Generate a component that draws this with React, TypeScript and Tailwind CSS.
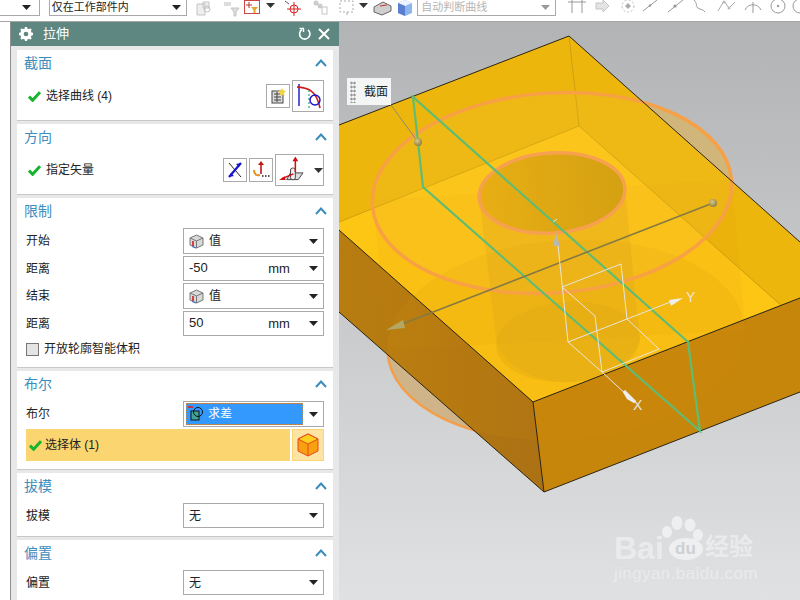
import React from "react";

const Caret = ({ c = "#222" }: { c?: string }) => (
  <svg width="9" height="5" viewBox="0 0 9 5" className="shrink-0"><path d="M0 0H9L4.5 5Z" fill={c} /></svg>
);

const Check = () => (
  <svg width="13" height="11" viewBox="0 0 13 11" className="shrink-0">
    <path d="M1 5.500L4.600 9.300L12 1.200" fill="none" stroke="#17b52e" strokeWidth="3" />
  </svg>
);

const Chevron = () => (
  <svg width="12" height="8" viewBox="0 0 12 8"><path d="M1 7L6 1.500L11 7" fill="none" stroke="#3a8dbd" strokeWidth="2" /></svg>
);

const ValueIcon = () => (
  <svg width="15" height="15" viewBox="0 0 15 15" className="shrink-0">
    <path d="M7.500 1L14 4V11L7.500 14L1 11V4Z" fill="#d8d8d8" stroke="#777" />
    <path d="M1 4L7.500 7L14 4M7.500 7V14" fill="none" stroke="#777" />
    <path d="M4 12V7" stroke="#d01010" strokeWidth="1.500" />
    <path d="M3 12.500L7 14" stroke="#4a78d8" strokeWidth="1.200" />
  </svg>
);

const Section = ({ title, h, children }: { title: string; h: string; children?: React.ReactNode }) => (
  <section className={`${h} bg-white border-b border-[#c8c8c8] mb-[3px] flex flex-col shrink-0`}>
    <div className="h-[26px] flex items-center justify-between pl-[7px] pr-[6px] text-[14px] text-[#3a8dbd]">
      <span>{title}</span>
      <Chevron />
    </div>
    {children}
  </section>
);

const Dropdown = ({ children, h = "h-[26px]" }: { children: React.ReactNode; h?: string }) => (
  <div className={`w-[141px] ${h} border border-[#aaaaaa] bg-white flex items-center justify-between pl-[5px] pr-[5px] text-[12px] text-[#222] shrink-0`}>
    {children}
  </div>
);

const Row = ({ label, children, cls = "" }: { label: string; children: React.ReactNode; cls?: string }) => (
  <div className={`flex items-center justify-between pl-[9px] pr-[9px] text-[12px] text-[#222] ${cls}`}>
    <span>{label}</span>
    {children}
  </div>
);

const Unit = ({ v }: { v: string }) => (
  <>
    <span className="w-[70px] -mt-[2px] text-[13px]">{v}</span>
    <span className="w-[36px] ml-auto mr-[12px] text-center text-[13px]">mm</span>
    <Caret />
  </>
);

const Box = ({ cls, children }: { cls: string; children: React.ReactNode }) => (
  <div className={`${cls} border border-[#aaaaaa] bg-white flex items-center justify-center shrink-0`}>{children}</div>
);

const Ico = ({ ml, w = 20, children }: { ml: string; w?: number; children: React.ReactNode }) => (
  <svg width={w} height="20" viewBox={`0 0 ${w} 20`} className={`${ml} shrink-0`}>{children}</svg>
);

const g = "#c4c4c4";

const Toolbar = () => (
  <header className="h-[22px] shrink-0 bg-white border-b border-[#a5a5a5] flex items-start text-[11px]">
    <div className="w-[40px] h-[16px] border border-t-0 border-l-0 border-[#aaaaaa] flex items-center justify-end pr-[8px]"><Caret /></div>
    <div className="ml-[9px] w-[140px] h-[16px] border border-t-0 border-[#aaaaaa] flex items-center justify-between pl-[2px] pr-[5px] text-[#222]">
      <span>仅在工作部件内</span><Caret />
    </div>
    <Ico ml="ml-[7px]"><path d="M3 4h8v11H3zM9 2h6v6H9z" fill="#eee" stroke={g} /><circle cx="13" cy="9" r="3" fill="none" stroke={g} /></Ico>
    <Ico ml="ml-[7px]"><path d="M3 2h7v4H3z" fill="#ddd" /><path d="M10 8h8l-3 4v4h-2v-4z" fill="#ddd" stroke={g} /></Ico>
    <div className="ml-[3px] w-[16px] h-[14px] border border-[#c44] flex items-center justify-center mt-0 shrink-0">
      <svg width="12" height="12" viewBox="0 0 12 12"><path d="M3 1v6M0 4h6" stroke="#b33" /><path d="M5 6h7l-2.500 3v3h-2V9z" fill="#e3a72b" /></svg>
    </div>
    <div className="ml-[6px] mt-[3px]"><Caret c="#333" /></div>
    <Ico ml="ml-[8px]"><path d="M2 1l4 3" stroke="#557" /><circle cx="11" cy="9" r="4" fill="none" stroke="#d22" /><path d="M11 2v14M4 9h14" stroke="#d22" /></Ico>
    <Ico ml="ml-[6px]"><circle cx="7" cy="3" r="2.500" fill="#ccc" /><circle cx="11" cy="6" r="2.500" fill="#ccc" /><rect x="13" y="7" width="5" height="7" fill="none" stroke={g} /></Ico>
    <Ico ml="ml-[8px]"><rect x="3" y="1" width="13" height="11" fill="none" stroke="#aaa" strokeDasharray="2 2" /><path d="M10 12v3" stroke="#aaa" /></Ico>
    <div className="ml-[2px] mt-[3px]"><Caret c="#333" /></div>
    <Ico ml="ml-[5px]"><path d="M1 7L10 2L18 6V11L9 15L1 12Z" fill="#cfcfcf" stroke="#666" /><path d="M7 6L14 5" stroke="#c33" /></Ico>
    <Ico ml="ml-[2px]"><path d="M3 3L10 0L17 3V13L10 16L3 13Z" fill="#8fb5ee" /><path d="M3 3L10 6L17 3L10 0Z" fill="#eef4ff" /><path d="M3 3L10 6V16L3 13Z" fill="#5a7fd0" /></Ico>
    <div className="ml-[2px] w-[140px] h-[16px] border border-t-0 border-[#aaaaaa] flex items-center justify-between pl-[3px] pr-[5px] text-[#b5b5b5]">
      <span>自动判断曲线</span><Caret c="#999" />
    </div>
    <Ico ml="ml-[11px]"><path d="M5 0v13M15 0v13M1 2h18" stroke="#999" fill="none" /></Ico>
    <Ico ml="ml-[5px]"><path d="M4 3h7V0l6 6-6 6V9H4z" fill="#e4e4e4" stroke={g} /></Ico>
    <Ico ml="ml-[6px]"><circle cx="10" cy="6" r="6" fill="none" stroke="#bbb" strokeDasharray="2 2" /><path d="M10 3l3 3-3 3-3-3z" fill="#aaa" /></Ico>
    <Ico ml="ml-[2px]"><path d="M3 11L17 0" stroke="#999" /><circle cx="10" cy="5.500" r="1.200" fill="#999" /></Ico>
    <Ico ml="ml-[5px]"><path d="M3 12L18 0" stroke="#999" /><circle cx="10" cy="6" r="1.600" fill="#999" /></Ico>
    <Ico ml="ml-[6px]"><path d="M3 0c4 4 1 6 4 8s5 1 7 4" fill="none" stroke="#999" /></Ico>
    <Ico ml="ml-[6px]"><path d="M1 11L7 1L12 8L18 2" fill="none" stroke="#aaa" /><circle cx="7" cy="2" r="1.500" fill="#bbb" /><circle cx="12" cy="8" r="1.500" fill="#bbb" /></Ico>
    <Ico ml="ml-[6px]"><path d="M2 10C5 3 15 3 18 10M10 2v11" fill="none" stroke="#999" /></Ico>
    <Ico ml="ml-[5px]"><circle cx="10" cy="6" r="7" fill="none" stroke="#999" /><circle cx="10" cy="6" r="1.200" fill="#999" /></Ico>
    <Ico ml="ml-[2px]" w={10}><circle cx="10" cy="6" r="7" fill="none" stroke="#999" /></Ico>
  </header>
);

const Panel = () => (
  <aside className="w-[329px] shrink-0 bg-[#e8e8e8] flex flex-col overflow-hidden border-l border-[#8f8f8f]">
    <div className="h-[24px] shrink-0 bg-[#5d8780] text-white flex items-center pl-[8px] pr-[9px] text-[13px]">
      <svg width="14" height="14" viewBox="0 0 24 24" className="shrink-0">
        <circle cx="12" cy="12" r="7" fill="none" stroke="#fff" strokeWidth="6" />
        <path d="M12 0v5M12 19v5M0 12h5M19 12h5M3.500 3.500l3.500 3.500M17 17l3.500 3.500M3.500 20.500L7 17M17 7l3.500-3.500" stroke="#fff" strokeWidth="4" />
      </svg>
      <span className="ml-[10px]">拉伸</span>
      <svg width="14" height="14" viewBox="0 0 14 14" className="ml-auto shrink-0"><path d="M4 2.500A5.200 5.200 0 1 0 10 2.800" fill="none" stroke="#fff" strokeWidth="1.600" /><path d="M1.500 1.500H5.500V5" fill="none" stroke="#fff" strokeWidth="1.400" /></svg>
      <svg width="12" height="12" viewBox="0 0 12 12" className="ml-[6px] shrink-0"><path d="M1 1L11 11M11 1L1 11" stroke="#fff" strokeWidth="2" /></svg>
    </div>
    <div className="flex flex-col pt-[4px] px-[6px]">
      <Section title="截面" h="h-[71px]">
        <div className="flex items-center pl-[11px] pr-[9px] text-[12px] text-[#222] h-[40px]">
          <Check />
          <span className="ml-[5px]">选择曲线 (4)</span>
          <Box cls="ml-auto w-[24px] h-[24px]">
            <svg width="18" height="18" viewBox="0 0 18 18"><rect x="3" y="4" width="11" height="12" fill="#ddd" stroke="#444" /><path d="M5 7h7M5 10h7M5 13h7M8 5v10" stroke="#444" /><path d="M13 1l1.300 2.500L17 4l-2 2 .5 2.700L13 7.500l-2.500 1.200.5-2.700-2-2 2.700-.5z" fill="#f4d63c" /></svg>
          </Box>
          <Box cls="ml-[2px] w-[32px] h-[32px]">
            <svg width="28" height="28" viewBox="0 0 28 28"><path d="M5 2V24" stroke="#1414c8" strokeWidth="1.400" /><path d="M3 5C12 6 22 6 26 26" fill="none" stroke="#d01818" strokeWidth="1.600" /><path d="M15 8V26" stroke="#0f8a6c" strokeDasharray="2 2" /><circle cx="21" cy="18" r="5" fill="none" stroke="#1414c8" strokeWidth="1.400" /></svg>
          </Box>
        </div>
      </Section>
      <Section title="方向" h="h-[71px]">
        <div className="flex items-center pl-[11px] pr-[9px] text-[12px] text-[#222] h-[40px]">
          <Check />
          <span className="ml-[5px]">指定矢量</span>
          <Box cls="ml-auto w-[24px] h-[24px]">
            <svg width="18" height="18" viewBox="0 0 18 18"><path d="M3 2L15 16" stroke="#222" /><path d="M15 2L3 16" stroke="#1414c8" strokeWidth="2.200" /><path d="M15 2l-5 1 3 3zM3 16l5-1-3-3z" fill="#1414c8" /></svg>
          </Box>
          <Box cls="ml-[2px] w-[24px] h-[24px]">
            <svg width="18" height="18" viewBox="0 0 18 18"><path d="M9 3V13" stroke="#c81414" strokeWidth="1.600" /><path d="M9 0l3 4H6z" fill="#c81414" /><path d="M2 9c0 5 3 6 6 5" fill="none" stroke="#e89020" strokeWidth="2" /><path d="M10 15h1.500M13 15h1.500M16 15h1.500" stroke="#222" strokeWidth="1.500" /></svg>
          </Box>
          <Box cls="ml-[2px] w-[49px] h-[32px] !justify-start pl-[3px]">
            <svg width="26" height="28" viewBox="0 0 26 28"><path d="M8 24l4-7h13l-5 7z" fill="#ddd" stroke="#444" /><rect x="12" y="12" width="5" height="12" rx="2" fill="#eee" stroke="#444" /><path d="M17 16V3" stroke="#d01010" strokeWidth="1.600" /><path d="M17 0l3 5h-6z" fill="#d01010" /><path d="M15 18L3 23" stroke="#d01010" strokeWidth="1.600" /><path d="M0 24.500l6-4 1 4z" fill="#d01010" /></svg>
            <span className="ml-[10px]"><Caret c="#333" /></span>
          </Box>
        </div>
      </Section>
      <Section title="限制" h="h-[170px]">
        <div className="flex flex-col gap-[2px] pt-[4px]">
          <Row label="开始"><Dropdown><span className="flex items-center gap-[5px]"><ValueIcon />值</span><Caret /></Dropdown></Row>
          <Row label="距离"><Dropdown h="h-[25px]"><Unit v="-50" /></Dropdown></Row>
          <Row label="结束"><Dropdown><span className="flex items-center gap-[5px]"><ValueIcon />值</span><Caret /></Dropdown></Row>
          <Row label="距离"><Dropdown h="h-[25px]"><Unit v="50" /></Dropdown></Row>
        </div>
        <label className="flex items-center pl-[9px] mt-[4px] text-[12px] text-[#222]">
          <span className="w-[13px] h-[13px] border border-[#777] bg-[#e4e4e4] shrink-0" />
          <span className="ml-[5px]">开放轮廓智能体积</span>
        </label>
      </Section>
      <Section title="布尔" h="h-[99px]">
        <Row label="布尔" cls="pt-[4px]">
          <Dropdown>
            <div className="-ml-[3px] w-[117px] h-[22px] bg-[#3399ff] border border-dotted border-[#c08a50] flex items-center text-white">
              <svg width="16" height="16" viewBox="0 0 16 16" className="ml-[1px] shrink-0"><path d="M0 1H5" stroke="#e11" strokeWidth="1.500" /><rect x="3" y="5" width="8" height="9" fill="#3fa39a" stroke="#111" /><circle cx="10" cy="6" r="4.500" fill="none" stroke="#111" /></svg>
              <span className="ml-[4px]">求差</span>
            </div>
            <Caret />
          </Dropdown>
        </Row>
        <div className="flex pl-[9px] pr-[9px] pt-[2px] gap-[2px]">
          <div className="w-[264px] h-[32px] bg-[#fbd56f] flex items-center pl-[3px] text-[12px] text-[#222]">
            <Check />
            <span className="ml-[3px]">选择体 (1)</span>
          </div>
          <div className="w-[32px] h-[32px] bg-[#fde4a5] border border-[#fbd56f] flex items-center justify-center shrink-0">
            <svg width="24" height="24" viewBox="0 0 24 24"><path d="M12 1L22 6V18L12 23L2 18V6Z" fill="#f8a010" stroke="#e84818" /><path d="M12 1L22 6L12 11L2 6Z" fill="#fcd020" stroke="#e84818" /><path d="M12 11V23" stroke="#e84818" /></svg>
          </div>
        </div>
      </Section>
      <Section title="拔模" h="h-[64px]">
        <Row label="拔模" cls="pt-[4px]"><Dropdown h="h-[25px]"><span>无</span><Caret /></Dropdown></Row>
      </Section>
      <Section title="偏置" h="h-[64px]">
        <Row label="偏置" cls="pt-[4px]"><Dropdown h="h-[25px]"><span>无</span><Caret /></Dropdown></Row>
      </Section>
    </div>
  </aside>
);

const Scene = () => (
  <svg viewBox="339 22 461 578" className="absolute inset-0 w-full h-full">
    <defs>
      <linearGradient id="bg" x1="0" y1="0" x2="0" y2="1"><stop offset="0" stopColor="#b2b3b5" /><stop offset="1" stopColor="#e0e1e3" /></linearGradient>
      <linearGradient id="hole" x1="0" y1="0" x2="1" y2="0"><stop offset="0" stopColor="#e8ae14" /><stop offset="1" stopColor="#d4a112" /></linearGradient>
      <linearGradient id="lf" x1="0" y1="0" x2="1" y2="0"><stop offset="0" stopColor="#b87d10" /><stop offset="1" stopColor="#ab7114" /></linearGradient>
      <radialGradient id="ball" cx="0.4" cy="0.35" r="0.7"><stop offset="0" stopColor="#d8c98a" /><stop offset="1" stopColor="#8d7a3c" /></radialGradient>
    </defs>
    <rect x="339" y="22" width="461" height="578" fill="url(#bg)" />
    <ellipse cx="552" cy="193" rx="180" ry="100" transform="rotate(-4 552 193)" fill="#c9b28c" />
    <path d="M373 200L388 350L745 330L732 180Z" fill="#c9b28c" />
    <ellipse cx="566" cy="340" rx="179" ry="100" transform="rotate(-4 566 340)" fill="#cdb99a" stroke="#f5a04e" strokeWidth="2.500" />
    <path d="M569 36L339 125V230L533 402L800 298V242Z" fill="#edb60c" />
    <path d="M579 126L339 222V230L533 402L780 305Z" fill="#fdc514" />
    <path d="M339 230L533 402L544 492L339 312Z" fill="url(#lf)" />
    <path d="M533 402L544 492L800 392V298Z" fill="#c6860b" />
    <path d="M569 36L579 126M579 126L339 222M579 126L782 306" stroke="#cf9f10" strokeWidth="1" fill="none" />
    <path d="M373 200L388 350L745 330L732 180Z" fill="#d8920f" fillOpacity="0.08" />
    <ellipse cx="566" cy="340" rx="179" ry="100" transform="rotate(-4 566 340)" fill="#d8920f" fillOpacity="0.13" />
    <ellipse cx="552" cy="193" rx="180" ry="100" transform="rotate(-4 552 193)" fill="#f6c838" fillOpacity="0.2" />
    <path d="M479 196L497 345C520 395 620 395 640 340L625 190Z" fill="#d09a1e" fillOpacity="0.22" />
    <ellipse cx="568" cy="342" rx="72" ry="40" transform="rotate(-4 568 342)" fill="#dca60f" fillOpacity="0.3" />
    <ellipse cx="552" cy="193" rx="73" ry="40" transform="rotate(-4 552 193)" fill="url(#hole)" stroke="#f6a050" strokeWidth="3.500" />
    <ellipse cx="552" cy="193" rx="180" ry="100" transform="rotate(-4 552 193)" fill="none" stroke="#f7a044" strokeWidth="3.500" />
    <path d="M569 36L339 125M569 36L800 242M339 230L533 402L800 298M533 402L544 492M339 312L544 492L800 392" fill="none" stroke="#2a2415" strokeWidth="1" />
    <path d="M413 97L423 187L700 431L688 342ZM413 97L688 342" fill="none" stroke="#5ebc74" strokeWidth="2.200" />
    <path d="M391 105L418 142" stroke="#8d8a70" strokeWidth="1" />
    <path d="M713 203L392 328" stroke="#857a42" strokeWidth="1.600" />
    <path d="M386 330L403 320L405 328Z" fill="#b4a764" />
    <circle cx="418" cy="142" r="4" fill="url(#ball)" />
    <circle cx="713" cy="203" r="4" fill="url(#ball)" />
    <g fill="none" stroke="#e8e6dc" strokeWidth="1">
      <path d="M558 245L568 342M562 287L621 264L627 319L568 342M562 287L595 316L602 372L568 342M627 319L659 349L602 372M627 319L678 299M602 372L630 398" />
      <path d="M553 222L557 219" />
    </g>
    <path d="M556 233L553 246H560Z" fill="#b8b8b8" />
    <path d="M683 298L669 300L671 306Z" fill="#eee" />
    <path d="M635 402L624 391L628 398Z" fill="#eee" stroke="#eee" strokeWidth="3" />
    <text x="686" y="302" fontSize="14" fill="#e8e6dc" fontFamily="Liberation Sans, sans-serif">Y</text>
    <text x="633" y="410" fontSize="14" fill="#e8e6dc" fontFamily="Liberation Sans, sans-serif">X</text>
    <g fill="#eeeff0">
      <ellipse cx="677" cy="523" rx="5.500" ry="7" />
      <ellipse cx="690" cy="525" rx="5.500" ry="6.500" />
      <ellipse cx="667" cy="532" rx="5" ry="6" />
      <ellipse cx="698" cy="535" rx="5" ry="6" />
      <ellipse cx="686" cy="549" rx="17" ry="11" />
    </g>
  </svg>
);

export default function App() {
  return (
    <div className="w-[800px] h-[600px] overflow-hidden flex flex-col bg-white font-['Liberation_Sans','Noto_Sans_CJK_SC',sans-serif]">
      <Toolbar />
      <div className="flex flex-1 min-h-0">
        <div className="w-[10px] shrink-0 bg-white" />
        <Panel />
        <main className="flex-1 relative overflow-hidden">
          <Scene />
          <div className="absolute left-[8px] top-[56px] w-[44px] h-[27px] bg-[#f4f5f5] flex items-center text-[12px] text-[#222]">
            <span className="ml-[3px] w-[6px] h-[22px] bg-[radial-gradient(#999_1px,transparent_1.2px)] bg-[length:3px_4px]" />
            <span className="ml-[8px]">截面</span>
          </div>
          <div className="absolute left-[275px] top-[510px] text-[32px] leading-[32px] font-bold text-[#eaebec]">Bai</div>
          <div className="absolute left-[336px] top-[518px] text-[17px] leading-[18px] font-bold text-[#cfd0d2]">du</div>
          <div className="absolute left-[366px] top-[510px] text-[24px] leading-[30px] font-bold text-[#eaebec]">经验</div>
          <div className="absolute left-[275px] top-[541px] text-[17px] leading-[22px] tracking-[0.4px] text-[#eaebec]">jingyan.baidu.com</div>
        </main>
      </div>
    </div>
  );
}
